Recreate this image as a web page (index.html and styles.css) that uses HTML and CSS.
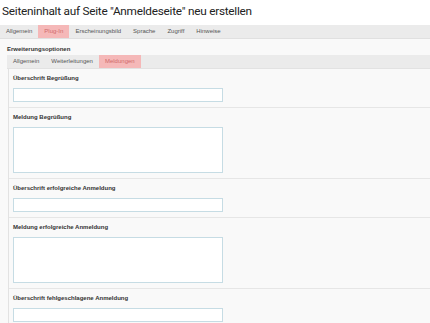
FILE: index.html
```html
<!DOCTYPE html>
<html lang="de">
<head>
    <meta charset="UTF-8">
    <meta name="viewport" content="width=device-width, initial-scale=1.0">
    <title>Seiteninhalt neu erstellen</title>
    <link rel="stylesheet" href="styles.css">
</head>
<body>
    <h1 class="page-title">Seiteninhalt auf Seite "Anmeldeseite" neu erstellen</h1>

    <nav class="tabs">
        <a href="#">Allgemein</a>
        <a href="#" class="active">Plug-In</a>
        <a href="#">Erscheinungsbild</a>
        <a href="#">Sprache</a>
        <a href="#">Zugriff</a>
        <a href="#">Hinweise</a>
    </nav>

    <div class="panel">
        <h2 class="panel-title">Erweiterungsoptionen</h2>

        <nav class="tabs sub-tabs">
            <a href="#">Allgemein</a>
            <a href="#">Weiterleitungen</a>
            <a href="#" class="active">Meldungen</a>
        </nav>

        <div class="fields">
            <div class="field">
                <label>Überschrift Begrüßung</label>
                <input type="text">
            </div>
            <div class="field">
                <label>Meldung Begrüßung</label>
                <textarea></textarea>
            </div>
            <div class="field">
                <label>Überschrift erfolgreiche Anmeldung</label>
                <input type="text">
            </div>
            <div class="field">
                <label>Meldung erfolgreiche Anmeldung</label>
                <textarea></textarea>
            </div>
            <div class="field">
                <label>Überschrift fehlgeschlagene Anmeldung</label>
                <input type="text">
            </div>
        </div>
    </div>
</body>
</html>
```

FILE: styles.css
```css
body {
    margin: 0;
    padding: 0;
    background-color: white;
    color: #333;
    font-family: "Liberation Sans", Arial, sans-serif;
}

.page-title {
    margin: 0;
    padding: 2px 2px 0;
    height: 23px;
    font-family: Roboto, "Open Sans", sans-serif;
    font-size: 11.8px;
    font-weight: normal;
    letter-spacing: -0.25px;
    line-height: 18px;
    color: #222;
}

.tabs {
    display: flex;
    height: 13px;
    background-color: #ebebeb;
    border-bottom: 1px solid #e0e0e0;
}

.tabs a {
    display: block;
    padding: 0 6px;
    font-size: 6px;
    line-height: 13px;
    color: #555;
    text-decoration: none;
}

.tabs a.active {
    background-color: #f5b8b8;
    color: #d06a6a;
}

.panel {
    background-color: #f9f9f9;
    min-height: 300px;
}

.panel-title {
    margin: 0;
    padding: 5px 7px 0;
    height: 11px;
    font-size: 6px;
    font-weight: bold;
    line-height: 10px;
    color: #333;
}

.sub-tabs {
    margin-left: 7px;
    height: 13px;
    border-bottom: 1px solid #e2e2e2;
}

.sub-tabs a {
    padding: 0 6px;
}

.fields {
    margin-left: 8px;
    border-left: 1px solid #e2e2e2;
}

.field {
    display: flex;
    flex-direction: column;
    padding: 5px 0 5px 4px;
    border-bottom: 1px solid #e6e6e6;
}

.field label {
    height: 8px;
    margin-bottom: 6px;
    font-size: 6px;
    font-weight: bold;
    line-height: 8px;
    color: #333;
}

.field input,
.field textarea {
    box-sizing: border-box;
    width: 210px;
    margin: 0;
    padding: 0;
    background-color: white;
    border: 1px solid #c6dce4;
    border-radius: 0;
    resize: none;
}

.field input {
    height: 14px;
}

.field textarea {
    height: 46px;
}
```
